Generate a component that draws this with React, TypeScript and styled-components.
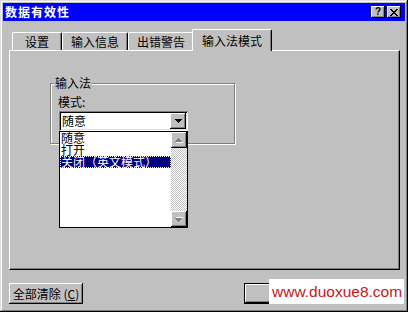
import React from 'react';
import styled, { createGlobalStyle, css } from 'styled-components';

const GlobalStyle = createGlobalStyle`
    html, body {
        margin: 0;
        padding: 0;
        background: #c0c0c0;
    }
    body {
        font-family: "Noto Sans CJK SC", "Liberation Sans", sans-serif;
        font-size: 12px;
        color: #000;
    }
`;

const raised = css`
    box-shadow: inset -1px -1px #000, inset 1px 1px #fff, inset -2px -2px #808080;
`;

const Window = styled.div`
    position: relative;
    width: 408px;
    height: 312px;
    box-sizing: border-box;
    padding: 3px;
    background: #c0c0c0;
    box-shadow: inset -1px -1px #000, inset 1px 1px #dfdfdf, inset -2px -2px #808080, inset 2px 2px #fff;
    display: flex;
    flex-direction: column;
`;

const TitleBar = styled.div`
    height: 18px;
    background: #0000ff;
    display: flex;
    align-items: center;
    padding: 0 4px 0 2px;
`;

const TitleText = styled.span`
    color: #fff;
    font-weight: 700;
    font-size: 12px;
    letter-spacing: 1px;
    line-height: 12px;
`;

const TitleButtons = styled.div`
    margin-left: auto;
    display: flex;
    gap: 2px;
`;

const TitleButton = styled.div`
    width: 14px;
    height: 12px;
    box-sizing: border-box;
    background: #c0c0c0;
    ${raised};
    display: flex;
    align-items: center;
    justify-content: center;
    font-family: "Liberation Sans", sans-serif;
    font-weight: 700;
    font-size: 10px;
    line-height: 10px;
`;

const Body = styled.div`
    padding: 8px 5px 0 6px;
    display: flex;
    flex-direction: column;
`;

const TabStrip = styled.div`
    height: 21px;
    display: flex;
    align-items: flex-end;
    padding-left: 3px;
`;

const Tab = styled.div<{ $active?: boolean }>`
    position: relative;
    z-index: ${p => (p.$active ? 2 : 0)};
    box-sizing: border-box;
    height: ${p => (p.$active ? 22 : 18)}px;
    min-width: 50px;
    padding: 0 ${p => (p.$active ? 9 : 8)}px;
    margin: 0 ${p => (p.$active ? '-2px' : '0')} ${p => (p.$active ? '-1px' : '0')};
    background: #c0c0c0;
    border-top: 1px solid #fff;
    border-left: 1px solid #fff;
    border-right: 1px solid #000;
    border-radius: 2px 2px 0 0;
    box-shadow: inset -1px 0 #808080;
    display: flex;
    align-items: center;
    justify-content: center;
    line-height: 12px;
    white-space: nowrap;
`;

const Panel = styled.div`
    height: 220px;
    box-sizing: border-box;
    border-top: 1px solid #fff;
    border-left: 1px solid #fff;
    border-right: 1px solid #000;
    border-bottom: 1px solid #000;
    box-shadow: inset -1px -1px #808080;
    padding: 32px 0 0 40px;
`;

const Group = styled.div`
    width: 185px;
    height: 61px;
    box-sizing: border-box;
    border: 1px solid #808080;
    box-shadow: inset 1px 1px #fff, 1px 1px #fff;
    padding-left: 7px;
    display: flex;
    flex-direction: column;
    align-items: flex-start;
`;

const GroupLabel = styled.div`
    margin: -7px 0 0 -4px;
    padding: 0 1px;
    background: #c0c0c0;
    line-height: 12px;
    height: 12px;
`;

const FieldLabel = styled.div`
    margin-top: 6px;
    line-height: 14px;
`;

const Combo = styled.div`
    position: relative;
    margin: 2px 0 0 1px;
    width: 129px;
    height: 20px;
    box-sizing: border-box;
    padding: 2px;
    background: #fff;
    box-shadow: inset 1px 1px #808080, inset -1px -1px #fff, inset 2px 2px #000, inset -2px -2px #dfdfdf;
    display: flex;
`;

const ComboText = styled.div`
    flex: 1;
    padding-left: 1px;
    line-height: 16px;
`;

const ArrowButton = styled.div`
    width: 16px;
    height: 16px;
    box-sizing: border-box;
    background: #c0c0c0;
    ${raised};
    display: flex;
    align-items: center;
    justify-content: center;
`;

const DropList = styled.div`
    position: absolute;
    top: 100%;
    left: 0;
    width: 129px;
    height: 97px;
    box-sizing: border-box;
    border: 1px solid #000;
    background: #fff;
    display: flex;
    z-index: 3;
`;

const Items = styled.div`
    flex: 1;
    display: flex;
    flex-direction: column;
`;

const Item = styled.div<{ $selected?: boolean }>`
    height: 12px;
    line-height: 12px;
    padding-left: 1px;
    white-space: nowrap;
    background: ${p => (p.$selected ? '#000080' : 'transparent')};
    color: ${p => (p.$selected ? '#fff' : '#000')};
    outline: ${p => (p.$selected ? '1px dotted #fff' : 'none')};
    outline-offset: -1px;
`;

const ScrollBar = styled.div`
    width: 16px;
    display: flex;
    flex-direction: column;
`;

const ScrollTrack = styled.div`
    flex: 1;
    background-image: repeating-conic-gradient(#c0c0c0 0 25%, #fff 0 50%);
    background-size: 2px 2px;
`;

const ButtonRow = styled.div`
    margin-top: 13px;
    display: flex;
    justify-content: space-between;
`;

const ButtonGroup = styled.div`
    display: flex;
    gap: 6px;
`;

const PushButton = styled.div<{ $width: number; $default?: boolean }>`
    width: ${p => p.$width}px;
    height: 21px;
    box-sizing: border-box;
    background: #c0c0c0;
    display: flex;
    align-items: center;
    justify-content: center;
    line-height: 12px;
    white-space: nowrap;
    ${p =>
        p.$default
            ? css`
                  box-shadow: inset 0 0 0 1px #000, inset -2px -2px #000, inset 2px 2px #fff, inset -3px -3px #808080;
              `
            : raised};
`;

const Watermark = styled.div`
    position: absolute;
    left: 269px;
    top: 279px;
    width: 135px;
    height: 25px;
    background: #fff;
    color: #cc1414;
    font-family: "Liberation Sans", Arial, sans-serif;
    font-size: 15.5px;
    line-height: 25px;
    padding-left: 3px;
    box-sizing: border-box;
    white-space: nowrap;
`;

const DownArrow = () => (
    <svg width="7" height="4" viewBox="0 0 7 4">
        <path d="M0 0h7v1H0zM1 1h5v1H1zM2 2h3v1H2zM3 3h1v1H3z" fill="#000" />
    </svg>
);

const DisabledArrow: React.FC<{ up?: boolean }> = ({ up }) => (
    <svg width="8" height="5" viewBox="0 0 8 5" style={{ transform: up ? 'none' : 'scaleY(-1)' }}>
        <path d="M4 1h1v1H4zM3 2h3v1H3zM2 3h5v1H2zM1 4h7v1H1z" fill="#fff" />
        <path d="M3 0h1v1H3zM2 1h3v1H2zM1 2h5v1H1zM0 3h7v1H0z" fill="#808080" />
    </svg>
);

const CloseGlyph = () => (
    <svg width="8" height="7" viewBox="0 0 8 7">
        <path d="M0 0h2v1H0zM6 0h2v1H6zM1 1h2v1H1zM5 1h2v1H5zM2 2h4v1H2zM3 3h2v1H3zM2 4h4v1H2zM1 5h2v1H1zM5 5h2v1H5zM0 6h2v1H0zM6 6h2v1H6z" fill="#000" />
    </svg>
);

const tabs = ['设置', '输入信息', '出错警告', '输入法模式'];
const options = ['随意', '打开', '关闭（英文模式）'];

export default function App() {
    return (
        <>
            <GlobalStyle />
            <Window>
                <TitleBar>
                    <TitleText>数据有效性</TitleText>
                    <TitleButtons>
                        <TitleButton>?</TitleButton>
                        <TitleButton>
                            <CloseGlyph />
                        </TitleButton>
                    </TitleButtons>
                </TitleBar>
                <Body>
                    <TabStrip>
                        {tabs.map((t, i) => (
                            <Tab key={t} $active={i === tabs.length - 1}>
                                {t}
                            </Tab>
                        ))}
                    </TabStrip>
                    <Panel>
                        <Group>
                            <GroupLabel>输入法</GroupLabel>
                            <FieldLabel>模式:</FieldLabel>
                            <Combo>
                                <ComboText>随意</ComboText>
                                <ArrowButton>
                                    <DownArrow />
                                </ArrowButton>
                                <DropList>
                                    <Items>
                                        {options.map((o, i) => (
                                            <Item key={o} $selected={i === 2}>
                                                {o}
                                            </Item>
                                        ))}
                                    </Items>
                                    <ScrollBar>
                                        <ArrowButton>
                                            <DisabledArrow up />
                                        </ArrowButton>
                                        <ScrollTrack />
                                        <ArrowButton>
                                            <DisabledArrow />
                                        </ArrowButton>
                                    </ScrollBar>
                                </DropList>
                            </Combo>
                        </Group>
                    </Panel>
                    <ButtonRow>
                        <PushButton $width={74}>
                            全部清除 (<u>C</u>)
                        </PushButton>
                        <ButtonGroup>
                            <PushButton $width={75} $default>
                                确定
                            </PushButton>
                            <PushButton $width={75}>取消</PushButton>
                        </ButtonGroup>
                    </ButtonRow>
                </Body>
                <Watermark>www.duoxue8.com</Watermark>
            </Window>
        </>
    );
}
